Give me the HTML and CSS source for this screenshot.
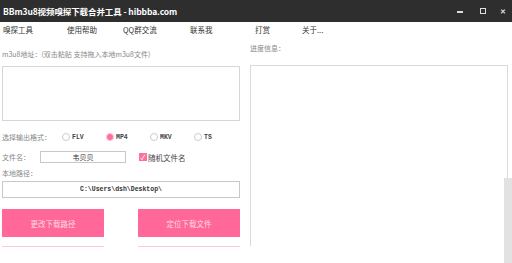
FILE: index.html
```html
<!DOCTYPE html>
<html lang="zh-CN">
<head>
    <meta charset="UTF-8">
    <title>BBm3u8视频嗅探下载合并工具 - hibbba.com</title>
    <link rel="stylesheet" href="styles.css">
</head>
<body>
    <div class="window">
        <div class="titlebar">
            <span class="title">BBm3u8视频嗅探下载合并工具 - hibbba.com</span>
            <div class="controls">
                <span class="ctl-min"></span>
                <span class="ctl-max"></span>
                <span class="ctl-close">✕</span>
            </div>
        </div>
        <div class="menubar">
            <span class="menu m1">嗅探工具</span>
            <span class="menu m2">使用帮助</span>
            <span class="menu m3">QQ群交流</span>
            <span class="menu m4">联系我</span>
            <span class="menu m5">打赏</span>
            <span class="menu">关于...</span>
        </div>
        <div class="main">
            <div class="left">
                <div class="label first">m3u8地址：(双击粘贴 支持拖入本地m3u8文件)</div>
                <div class="urlbox"></div>
                <div class="row formats">
                    <span class="label">选择输出格式：</span>
                    <span class="radio"><i class="dot"></i>FLV</span>
                    <span class="radio on"><i class="dot"></i>MP4</span>
                    <span class="radio"><i class="dot"></i>MKV</span>
                    <span class="radio"><i class="dot"></i>TS</span>
                </div>
                <div class="row filename">
                    <span class="label">文件名：</span>
                    <span class="input name">韦贝贝</span>
                    <span class="check"><i class="box">✓</i>随机文件名</span>
                </div>
                <div class="label pathlabel">本地路径：</div>
                <div class="input path">C:\Users\dsh\Desktop\</div>
                <div class="buttons">
                    <button class="btn">更改下载路径</button>
                    <button class="btn">定位下载文件</button>
                </div>
                <div class="buttons more">
                    <span class="btn-edge"></span>
                    <span class="btn-edge"></span>
                </div>
            </div>
            <div class="right">
                <div class="label progress">进度信息：</div>
                <div class="logbox"></div>
            </div>
            <div class="scroll"></div>
        </div>
    </div>
</body>
</html>
```

FILE: styles.css
```css
body { margin: 0; background: #fff; font-family: "Noto Sans CJK SC", "Noto Sans", sans-serif; }
.window { width: 512px; height: 263px; overflow: hidden; position: relative; }
.titlebar { height: 22px; background: #2e2e2e; color: #fff; display: flex; justify-content: space-between; align-items: center; padding: 0 0 0 3px; }
.title { font-size: 8.5px; font-weight: bold; letter-spacing: -0.1px; }
.controls { display: flex; align-items: center; height: 22px; }
.ctl-min { width: 6px; height: 2px; background: #ddd; margin-right: 17px; margin-top: 2px; }
.ctl-max { width: 4px; height: 4px; border: 1.5px solid #ddd; margin-right: 14px; }
.ctl-close { color: #ddd; font-size: 7px; font-weight: bold; width: 12px; }
.menubar { height: 14px; display: flex; align-items: center; padding-left: 3px; font-size: 7.5px; color: #333; }
.menu { white-space: nowrap; }
.m1 { width: 64px; } .m2 { width: 56px; } .m3 { width: 67px; } .m4 { width: 65px; } .m5 { width: 47px; }
.main { display: flex; position: relative; height: 227px; }
.left { width: 238px; padding-left: 2px; }
.label { font-size: 7px; color: #888; white-space: nowrap; }
.first { margin-top: 13px; height: 10px; line-height: 10px; }
.urlbox { margin-top: 7px; height: 53px; border: 1px solid #d6d6d6; }
.row { display: flex; align-items: center; }
.formats { margin-top: 10px; height: 12px; }
.radio { display: flex; align-items: center; font-family: "Liberation Mono", monospace; font-weight: bold; font-size: 6.5px; color: #444; width: 44px; }
.formats .label { width: 60px; }
.dot { width: 6px; height: 6px; border: 1px solid #ccc; border-radius: 50%; margin-right: 2px; box-sizing: content-box; }
.on .dot { background: #ff6e9c; border-color: #ffc3d5; }
.filename { margin-top: 8px; height: 12px; }
.filename .label { width: 38px; }
.input { border: 1px solid #c8c8c8; font-size: 7px; color: #333; text-align: center; box-sizing: border-box; }
.name { width: 86px; height: 12px; line-height: 10px; }
.check { display: flex; align-items: center; margin-left: 13px; font-size: 7.5px; color: #444; }
.box { width: 8px; height: 8px; background: #ff6e9c; color: #fff; font-size: 7px; font-style: normal; line-height: 8px; text-align: center; margin-right: 1px; }
.pathlabel { margin-top: 4px; height: 12px; line-height: 12px; }
.path { margin-top: 2px; height: 17px; line-height: 15px; font-family: "Liberation Mono", monospace; font-weight: bold; font-size: 6.5px; }
.buttons { display: flex; justify-content: space-between; margin-top: 11px; }
.btn { width: 102px; height: 28px; background: #ff6898; color: #ffd9e5; border: none; font-family: inherit; font-size: 7.5px; padding: 0; }
.more { margin-top: 9px; }
.btn-edge { width: 102px; height: 1px; background: #ffc9da; }
.right { flex: 1; margin-left: 10px; margin-right: 4px; }
.progress { margin-top: 7px; height: 10px; line-height: 10px; }
.logbox { margin-top: 12px; height: 180px; border: 1px solid #dadada; border-bottom: none; }
.scroll { position: absolute; right: 0; top: 142px; width: 8px; height: 85px; background: #e2e2e2; }
```
